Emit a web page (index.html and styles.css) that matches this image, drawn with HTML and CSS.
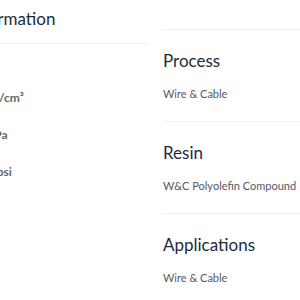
FILE: index.html
```html
<!DOCTYPE html>
<html lang="en">
<head>
    <meta charset="UTF-8">
    <meta name="viewport" content="width=device-width, initial-scale=1.0">
    <title>Product Information</title>
    <link rel="stylesheet" href="styles.css">
</head>
<body>
    <div class="layout">

        <!-- Left: technical information table -->
        <div class="info">
            <h2 class="info-title">Information</h2>
            <div class="props">
                <div class="prop">
                    <span class="prop-name">Density</span>
                    <span class="prop-value">0.94 g/cm³</span>
                </div>
                <div class="prop">
                    <span class="prop-name">Tensile Strength</span>
                    <span class="prop-value">23 MPa</span>
                </div>
                <div class="prop">
                    <span class="prop-name">Tensile Strength</span>
                    <span class="prop-value">3300 psi</span>
                </div>
            </div>
        </div>

        <!-- Right: product details -->
        <div class="details">
            <div class="section">
                <h3>Process</h3>
                <p>Wire &amp; Cable</p>
            </div>
            <div class="section">
                <h3>Resin</h3>
                <p>W&amp;C Polyolefin Compound</p>
            </div>
            <div class="section">
                <h3>Applications</h3>
                <p>Wire &amp; Cable</p>
            </div>
        </div>

    </div>
</body>
</html>
```

FILE: styles.css
```css
body {
    margin: 0;
    font-family: Lato, "Liberation Sans", sans-serif;
    background: #ffffff;
    color: #1d2b3a;
    overflow: hidden;
}
.layout {
    display: flex;
    gap: 15px;
    margin-left: -150px;
}
.info {
    flex: none;
    width: 298px;
}
.info-title {
    font-size: 17px;
    font-weight: 400;
    margin: 0;
    padding: 8px 0 13px 118px;
    line-height: 22px;
    border-bottom: 1px solid #eef0f3;
}
.props {
    padding-top: 46px;
}
.prop {
    display: flex;
    height: 37px;
    font-size: 12px;
    font-weight: 700;
    color: #62676e;
}
.prop-name {
    width: 116px;
}
.details {
    flex: none;
    width: 300px;
    padding-top: 29px;
}
.section {
    border-top: 1px solid #eceff3;
    padding: 20px 0 21px;
}
.section h3 {
    font-size: 17px;
    font-weight: 400;
    margin: 0 0 16px;
    line-height: 22px;
}
.section p {
    font-size: 11px;
    margin: 0;
    color: #555a61;
    line-height: 12px;
}
```
